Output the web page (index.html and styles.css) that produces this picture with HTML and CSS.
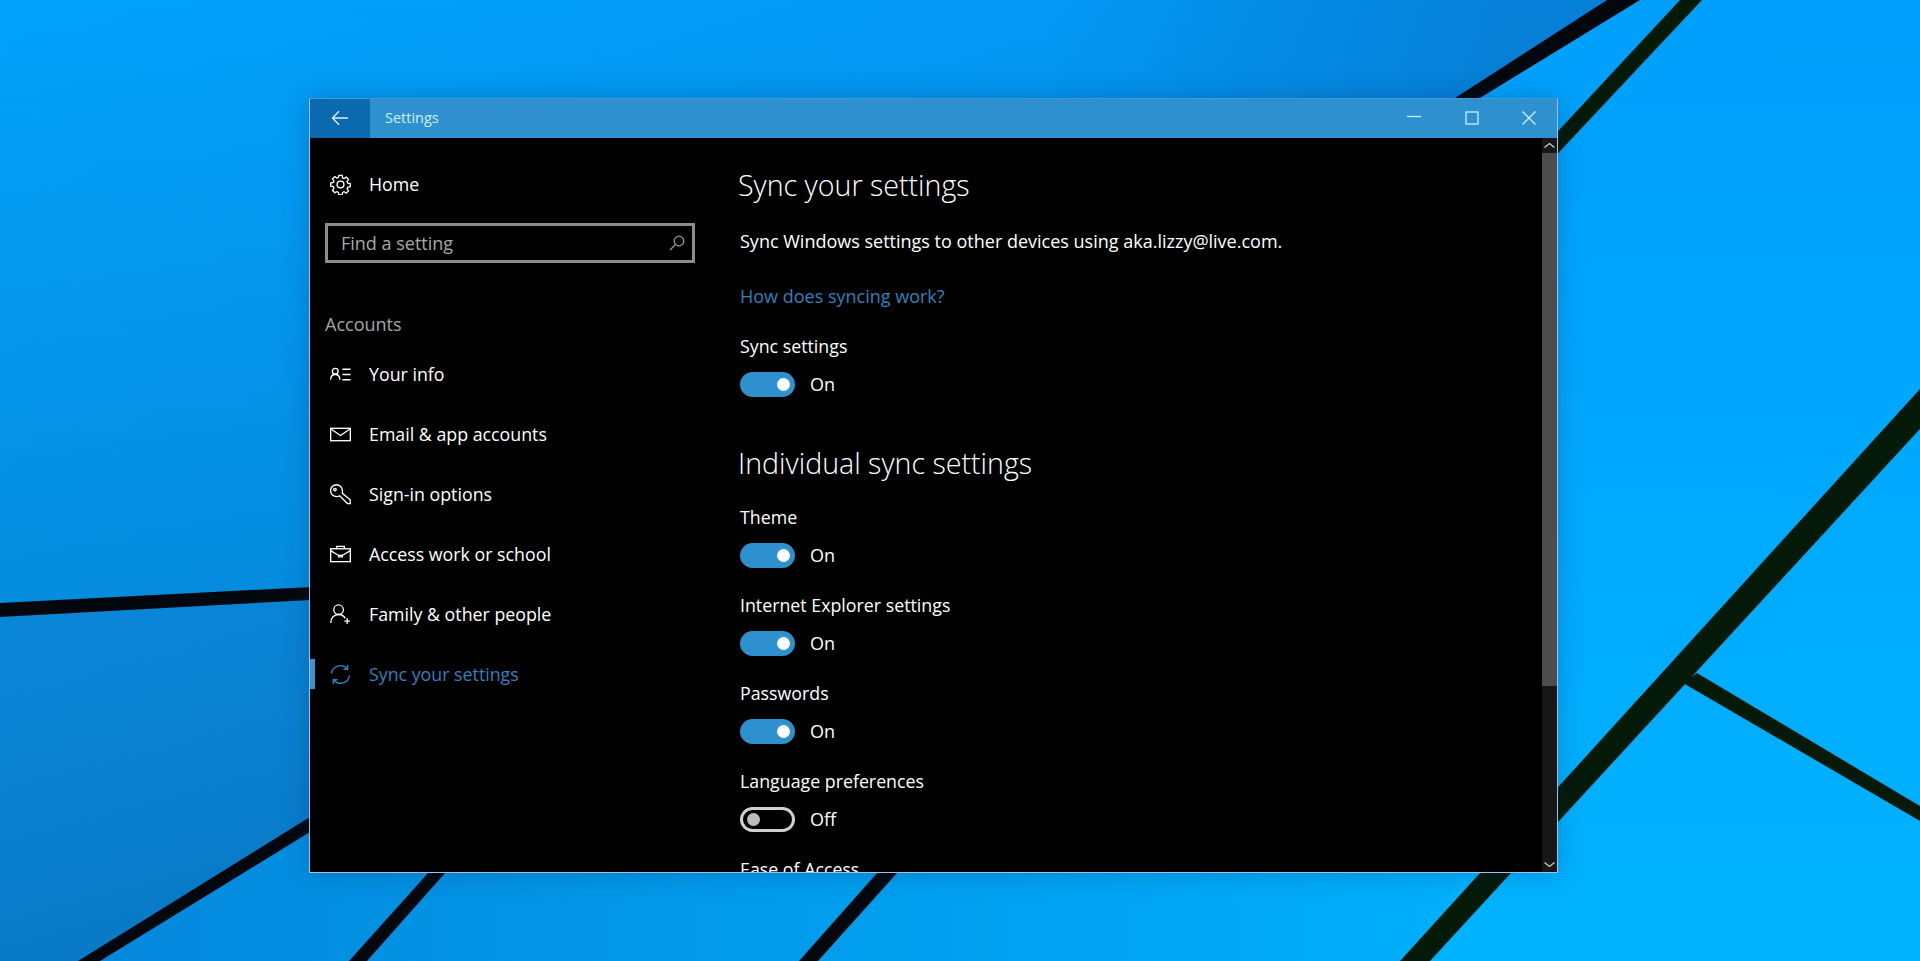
FILE: index.html
```html
<!DOCTYPE html>
<html lang="en">
<head>
    <meta charset="UTF-8">
    <meta name="viewport" content="width=device-width, initial-scale=1.0">
    <title>Settings</title>
    <link rel="stylesheet" href="styles.css">
</head>
<body>
<!-- Wallpaper -->
<svg class="wallpaper" viewBox="0 0 1920 961" preserveAspectRatio="none">
    <defs>
        <linearGradient id="paneTop" gradientUnits="userSpaceOnUse" x1="0" y1="0" x2="1500" y2="100">
            <stop offset="0" stop-color="#02a2fb"/>
            <stop offset="0.7" stop-color="#0298f4"/>
            <stop offset="1" stop-color="#0680d8"/>
        </linearGradient>
        <linearGradient id="paneShade" gradientUnits="userSpaceOnUse" x1="0" y1="0" x2="0" y2="600">
            <stop offset="0" stop-color="#0a6eb4" stop-opacity="0"/>
            <stop offset="1" stop-color="#0a6eb4" stop-opacity="0.4"/>
        </linearGradient>
        <linearGradient id="paneLeft" x1="0" y1="0" x2="0.6" y2="1">
            <stop offset="0" stop-color="#0a88dc"/>
            <stop offset="1" stop-color="#0876c0"/>
        </linearGradient>
        <linearGradient id="paneBottom" x1="0" y1="0" x2="1" y2="0">
            <stop offset="0" stop-color="#0488dc"/>
            <stop offset="1" stop-color="#00b0fc"/>
        </linearGradient>
        <linearGradient id="paneRight" x1="0" y1="0" x2="0" y2="1">
            <stop offset="0" stop-color="#009ffb"/>
            <stop offset="1" stop-color="#00b3ff"/>
        </linearGradient>
    </defs>
    <rect width="1920" height="961" fill="url(#paneRight)"/>
    <polygon points="0,0 1620,0 1460,98 310,590 0,610" fill="url(#paneTop)"/>
    <polygon points="0,0 1620,0 1460,98 310,590 0,610" fill="url(#paneShade)"/>
    <polygon points="0,610 900,560 310,825 90,961 0,961" fill="url(#paneLeft)"/>
    <polygon points="90,961 310,825 1000,700 1500,800 1415,961" fill="url(#paneBottom)"/>
    <g class="bars-dark">
        <polygon points="0,603 310,587 310,600 0,617"/>
        <polygon points="310,817 310,832 100,961 78,961"/>
        <polygon points="1607,0 1640,0 1480,98 1455,98"/>
        <polygon points="429,872 446,872 367,961 349,961"/>
        <polygon points="878,872 898,872 818,961 799,961"/>
    </g>
    <g class="bars-green">
        <polygon points="1680,0 1702,0 1500,215 1480,215"/>
        <polygon points="1920,389 1920,429 1430,961 1400,961"/>
        <polygon points="1697,673 1920,806 1920,821 1683,683"/>
    </g>
</svg>

<div class="window">
    <div class="titlebar">
        <div class="back-button">
            <svg width="18" height="16" viewBox="0 0 18 16"><path d="M1.5 8H17M8 1.2 1.5 8 8 14.8"/></svg>
        </div>
        <div class="title">Settings</div>
        <div class="window-controls">
            <svg width="14" height="14" viewBox="0 0 14 14"><path d="M0 5.500H14"/></svg>
            <svg width="14" height="14" viewBox="0 0 14 14"><rect x="1" y="1" width="12" height="12"/></svg>
            <svg width="14" height="14" viewBox="0 0 14 14"><path d="M.5.5 13.500 13.500M13.500.5.5 13.500"/></svg>
        </div>
    </div>

    <div class="window-body">
        <nav class="sidebar">
            <a class="nav-item home">
                <svg class="nav-icon" viewBox="0 0 22 22"><path d="M9.300 1.500h3.400l.5 2.600 1.600.7 2.200-1.500 2.400 2.400-1.500 2.200.7 1.600 2.600.5v3.400l-2.600.5-.7 1.600 1.500 2.200-2.400 2.400-2.200-1.500-1.600.7-.5 2.600H9.300l-.5-2.600-1.600-.7L5 19.500l-2.400-2.400 1.500-2.200-.7-1.600-2.600-.5V9.400l2.600-.5.7-1.600L2.600 5.100 5 2.700l2.200 1.500 1.600-.7z"/><circle cx="11" cy="11" r="3.600"/></svg>
                <span>Home</span>
            </a>
            <div class="search-box">
                <span>Find a setting</span>
                <svg width="16" height="16" viewBox="0 0 16 16"><circle cx="10" cy="6" r="4.800"/><path d="M6.500 9.500 1 15"/></svg>
            </div>
            <div class="group-title">Accounts</div>
            <a class="nav-item">
                <svg class="nav-icon" viewBox="0 0 22 22"><circle cx="5.500" cy="7.500" r="3"/><path d="M.7 16.500c0-3.500 2-5.500 4.800-5.500s4.800 2 4.800 5.500M13 5.500h8.500M13 11h8.500M13 16.500h8.500"/></svg>
                <span>Your info</span>
            </a>
            <a class="nav-item">
                <svg class="nav-icon" viewBox="0 0 22 22"><rect x=".7" y="4.500" width="20.600" height="13"/><path d="M.7 5l10.300 7 10.300-7"/></svg>
                <span>Email &amp; app accounts</span>
            </a>
            <a class="nav-item">
                <svg class="nav-icon" viewBox="0 0 22 22"><path d="M13 7a6.200 6.200 0 1 0-6 6.200c1.200 0 2.300-.3 3.200-.9l8 8.200h3v-4L13 9.800c0-.9.100-1.800 0-2.800z"/><circle cx="5.200" cy="5.800" r="1.300"/></svg>
                <span>Sign-in options</span>
            </a>
            <a class="nav-item">
                <svg class="nav-icon" viewBox="0 0 22 22"><rect x=".7" y="5" width="20.600" height="13.500"/><path d="M7 5V2.500h8V5M.7 7l8.300 5h4l8.300-5M9 11v2.500h4V11"/></svg>
                <span>Access work or school</span>
            </a>
            <a class="nav-item">
                <svg class="nav-icon" viewBox="0 0 22 22"><circle cx="9" cy="6" r="5"/><path d="M.8 20c0-5.500 3.500-9 8.200-9 3 0 5.500 1.400 7 4M18 15v6M15 18h6"/></svg>
                <span>Family &amp; other people</span>
            </a>
            <a class="nav-item active">
                <svg class="nav-icon" viewBox="0 0 22 22"><path d="M1.500 10A9.500 9.500 0 0 1 18 5M20.500 12A9.500 9.500 0 0 1 4 17M18.500 .8V5.500H14M3.500 21.200V16.500H8"/></svg>
                <span>Sync your settings</span>
            </a>
        </nav>

        <main class="content">
            <h1>Sync your settings</h1>
            <p class="intro">Sync Windows settings to other devices using aka.lizzy@live.com.</p>
            <a class="help-link">How does syncing work?</a>

            <div class="setting first">
                <div class="setting-label">Sync settings</div>
                <div class="toggle-row"><div class="toggle on"><i></i></div><span>On</span></div>
            </div>

            <h2>Individual sync settings</h2>

            <div class="setting">
                <div class="setting-label">Theme</div>
                <div class="toggle-row"><div class="toggle on"><i></i></div><span>On</span></div>
            </div>
            <div class="setting">
                <div class="setting-label">Internet Explorer settings</div>
                <div class="toggle-row"><div class="toggle on"><i></i></div><span>On</span></div>
            </div>
            <div class="setting">
                <div class="setting-label">Passwords</div>
                <div class="toggle-row"><div class="toggle on"><i></i></div><span>On</span></div>
            </div>
            <div class="setting">
                <div class="setting-label">Language preferences</div>
                <div class="toggle-row"><div class="toggle"><i></i></div><span>Off</span></div>
            </div>
            <div class="setting">
                <div class="setting-label">Ease of Access</div>
            </div>
        </main>

        <div class="scrollbar">
            <div class="scroll-arrow">
                <svg width="11" height="7" viewBox="0 0 11 7"><path d="M.5 5.500 5.500 1.500l5 4"/></svg>
            </div>
            <div class="scroll-thumb"></div>
            <div class="scroll-track"></div>
            <div class="scroll-arrow">
                <svg width="11" height="7" viewBox="0 0 11 7"><path d="M.5 1.500l5 4 5-4"/></svg>
            </div>
        </div>
    </div>
</div>
</body>
</html>
```

FILE: styles.css
```css
/* Desktop */
body {
    margin: 0;
    height: 100vh;
    overflow: hidden;
    background-color: #00a8fc;
    font-family: "Open Sans", "Noto Sans", sans-serif;
    color: #fff;
}

.wallpaper {
    position: absolute;
    left: 0;
    top: 0;
    width: 1920px;
    height: 961px;
}

.bars-dark polygon {
    fill: #02080e;
}

.bars-green polygon {
    fill: #061a0a;
}

/* Window */
.window {
    position: absolute;
    left: 309px;
    top: 98px;
    width: 1249px;
    height: 775px;
    box-sizing: border-box;
    border: 1px solid #9fc0ec;
    border-top-color: #3f9ad6;
    background-color: #000;
    display: flex;
    flex-direction: column;
    box-shadow: 0 0 24px rgba(0, 40, 90, 0.25);
}

.titlebar {
    height: 39px;
    flex-shrink: 0;
    display: flex;
    align-items: center;
    background-color: #2f90cf;
}

.back-button {
    width: 60px;
    height: 100%;
    box-sizing: border-box;
    padding-bottom: 2px;
    display: flex;
    align-items: center;
    justify-content: center;
    background-color: #0b69ad;
}

.back-button svg path {
    fill: none;
    stroke: #d8f0ff;
    stroke-width: 1.4;
}

.title {
    margin: 0 0 2px 15px;
    font-size: 14.5px;
    color: #cdeefc;
}

.window-controls {
    margin: 0 21px 1px auto;
    display: flex;
    gap: 43.5px;
}

.window-controls svg * {
    fill: none;
    stroke: #c4f2ff;
    stroke-width: 1.3;
}

.window-body {
    flex: 1;
    min-height: 0;
    display: flex;
}

/* Sidebar */
.sidebar {
    width: 428px;
    flex-shrink: 0;
    padding-top: 16px;
    box-sizing: border-box;
}

.nav-item {
    height: 60px;
    display: flex;
    align-items: center;
    padding-left: 20px;
    font-size: 17.8px;
    color: #fff;
    position: relative;
}

.nav-icon {
    width: 21px;
    height: 21px;
    margin-right: 18px;
    flex-shrink: 0;
    fill: none;
    stroke: #fff;
    stroke-width: 1.4;
}

.nav-item.active {
    color: #2f82bd;
}

.nav-item.active .nav-icon {
    stroke: #2f82bd;
}

.nav-item.active::before {
    content: "";
    position: absolute;
    left: 0;
    top: 15px;
    width: 5px;
    height: 30px;
    background-color: #3f90cf;
}

.search-box {
    margin: 9px 0 0 15px;
    width: 370px;
    height: 40px;
    box-sizing: border-box;
    border: 3px solid #8c8c8c;
    display: flex;
    align-items: center;
    justify-content: space-between;
    padding: 0 7px 0 13px;
    font-size: 18px;
    color: #a8a8a8;
}

.search-box svg * {
    fill: none;
    stroke: #9a9a9a;
    stroke-width: 1.3;
}

.group-title {
    margin: 46px 0 5px 15px;
    height: 30px;
    line-height: 30px;
    font-size: 18px;
    color: #a6a6a6;
}

/* Content */
.content {
    flex: 1;
    min-width: 0;
    overflow: hidden;
    padding-top: 25px;
    font-size: 18px;
}

h1, h2 {
    margin: 0;
    font-weight: 300;
    font-size: 28.6px;
    line-height: 44px;
}

h2 {
    margin: 21px 0 18px;
}

.intro {
    margin: 20px 0 0 2px;
    line-height: 28px;
}

.help-link {
    display: block;
    margin: 27px 0 0 2px;
    line-height: 28px;
    color: #2f82bd;
}

.setting {
    margin-left: 2px;
    height: 88px;
}

.setting.first {
    margin-top: 22px;
}

.setting-label {
    font-size: 17.8px;
    line-height: 28px;
}

.toggle-row {
    margin-top: -1px;
    height: 50px;
    display: flex;
    align-items: center;
    gap: 15px;
}

.toggle {
    width: 55px;
    height: 25px;
    box-sizing: border-box;
    border: 3px solid #d0d0d0;
    border-radius: 13px;
    display: flex;
    align-items: center;
    padding: 0 4px;
}

.toggle i {
    width: 13px;
    height: 13px;
    border-radius: 50%;
    background-color: #bdbdbd;
}

.toggle.on {
    padding: 0 2px;
    background-color: #2f90cf;
    border-color: #2f90cf;
    justify-content: flex-end;
}

.toggle.on i {
    background-color: #fff;
}

/* Scrollbar */
.scrollbar {
    width: 15px;
    flex-shrink: 0;
    display: flex;
    flex-direction: column;
    background-color: #171717;
}

.scroll-arrow {
    height: 15px;
    display: flex;
    align-items: center;
    justify-content: center;
}

.scroll-arrow svg path {
    fill: none;
    stroke: #cfcfcf;
    stroke-width: 1.2;
}

.scroll-thumb {
    height: 533px;
    background-color: #4d4d4d;
}

.scroll-track {
    flex: 1;
}
```
